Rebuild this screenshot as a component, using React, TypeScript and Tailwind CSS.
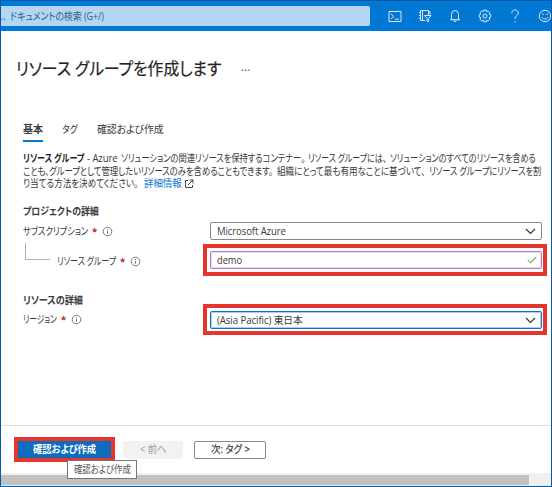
import React, { useLayoutEffect, useRef, useState } from 'react';
import clsx from 'clsx';

const CloudShellIcon = () => (
  <svg className="h-[13px] w-[14px]" viewBox="0 0 14 13" fill="none" stroke="currentColor">
    <path d="M1 1.5h12v10H1z" />
    <path d="M3 4l2.7 2.4L3 8.8M7 9.2h4" />
  </svg>
);

const DirectoryFilterIcon = () => (
  <svg className="h-[14px] w-[14px]" viewBox="0 0 14 14" fill="none" stroke="currentColor">
    <path d="M7 11.5H2.5v-10h8V6M4.5 1.5v10M1 3.5h1.5M1 6.5h1.5M1 9.5h1.5M10.5 2.5h1.5v3" />
    <path d="M6.5 6.5h6.5L10.7 9.3v3.2H9V9.3z" />
  </svg>
);

const BellIcon = () => (
  <svg className="h-[14px] w-[12px]" viewBox="0 0 12 14" fill="none" stroke="currentColor">
    <path d="M2.5 10.5V5.5a3.5 4 0 0 1 7 0v5M1 10.7h10" />
    <path d="M4.7 11.2a1.3 1.3 0 0 0 2.6 0" />
  </svg>
);

const GearIcon = () => (
  <svg className="h-[14px] w-[14px]" viewBox="0 0 14 14" fill="none" stroke="currentColor" strokeLinejoin="round">
    <path d="M5.8 1h2.4l.4 1.6 1.4-.8 1.9 1.9-.9 1.4 1.7.5v2.6l-1.7.5.9 1.5-1.9 1.9-1.4-.9-.4 1.6H5.8l-.5-1.6-1.4.9L2 10.2l.9-1.5-1.6-.5V5.6L2.9 5 2 3.7l1.9-1.9 1.4.8z" />
    <circle cx="7" cy="7" r="2" />
  </svg>
);

const HelpIcon = () => (
  <svg className="h-[14px] w-[10px]" viewBox="0 0 10 14" fill="none" stroke="currentColor">
    <path d="M1.8 4.3C1.8 2.200 3.100 1 5 1s3.300 1.200 3.300 3C8.300 6.500 5 6.700 5 10" />
    <path d="M5 11.800v1.400" />
  </svg>
);

const SmileIcon = () => (
  <svg className="h-[14px] w-[14px]" viewBox="0 0 14 14" fill="none" stroke="currentColor">
    <circle cx="7" cy="7" r="5.7" />
    <path d="M4 8.300c1.200 2.300 4.800 2.300 6 0M5 4.500v1.500M9 4.500v1.500" />
  </svg>
);

const InfoIcon = () => (
  <svg className="h-[11px] w-[11px] shrink-0 text-[#605e5c]" viewBox="0 0 11 11" fill="none" stroke="currentColor" strokeWidth="0.8">
    <circle cx="5.5" cy="5.5" r="4.3" />
    <path d="M5.500 4.900v3M5.500 3v1" />
  </svg>
);

const ExternalIcon = () => (
  <svg className="h-[10px] w-[10px] text-[#323130]" viewBox="0 0 10 10" fill="none" stroke="currentColor" strokeWidth="0.9">
    <path d="M4 1.500H1.500v7h7V6M5.500 1H9v3.500M9 1L4 6" />
  </svg>
);

const ChevronIcon = () => (
  <svg className="h-[7px] w-[11px] text-[#323130]" viewBox="0 0 11 7" fill="none" stroke="currentColor" strokeWidth="1.1">
    <path d="M1 1l4.500 4.500L10 1" />
  </svg>
);

const CheckIcon = () => (
  <svg className="h-[8px] w-[10px] text-[#6bb23c]" viewBox="0 0 10 8" fill="none" stroke="currentColor" strokeWidth="1.1">
    <path d="M.8 4.200l2.700 2.600L9.300 1" />
  </svg>
);

const toolbarIcons = [CloudShellIcon, DirectoryFilterIcon, BellIcon, GearIcon, HelpIcon, SmileIcon];

// Condenses its text so that it fills exactly the width of the box
const FitText: React.FC<{ className: string; children: string }> = ({ className, children }) => {
  const boxRef = useRef<HTMLSpanElement>(null);
  const textRef = useRef<HTMLSpanElement>(null);
  const [scale, setScale] = useState(1);

  useLayoutEffect(() => {
    if (boxRef.current && textRef.current) {
      setScale(boxRef.current.clientWidth / textRef.current.offsetWidth);
    }
  }, [children]);

  return (
    <span ref={boxRef} className={clsx('block shrink-0', className)}>
      <span ref={textRef} className="inline-block origin-left tracking-[-0.1px]" style={{ transform: `scaleX(${scale})` }}>
        {children}
      </span>
    </span>
  );
};

interface FieldLabelProps {
  text: string;
  className: string;
}

const FieldLabel: React.FC<FieldLabelProps> = ({ text, className }) => (
  <div className="flex h-[18px] items-center">
    <FitText className={className}>{text}</FitText>
    <span className="mr-[3px] w-[11px] shrink-0 pl-[4px] pt-[2px] text-[9.500px] font-bold text-[#b3262c]">*</span>
    <InfoIcon />
  </div>
);

interface FieldBoxProps {
  className: string;
  icon: React.ReactNode;
  children: React.ReactNode;
}

const FieldBox: React.FC<FieldBoxProps> = ({ className, icon, children }) => (
  <div className={clsx('flex h-[18px] items-center justify-between rounded-[2px] border bg-white pl-[6px]', className)}>
    {children}
    {icon}
  </div>
);

// Red outline that marks the fields to fill in
const Highlight: React.FC<{ className: string; children: React.ReactNode }> = ({ className, children }) => (
  <div className={clsx('border-4 border-[#e5352d]', className)}>{children}</div>
);

const App: React.FC = () => {
  return (
    <div className="flex h-[487px] w-[552px] flex-col overflow-hidden whitespace-nowrap border border-[#0a59a4] bg-white font-['Open_Sans','Noto_Sans_CJK_JP',sans-serif] text-[10.5px] leading-none text-[#3b3a39] [font-feature-settings:'palt']">
      <header className="flex h-[30px] shrink-0 items-center bg-[#0078d4]">
        <div className="flex h-5 w-[369px] shrink-0 items-center rounded-r-[2px] bg-[#b3d6f2] text-[#2f5f8c]">
          <FitText className="-ml-[7px] w-[8px]">ス</FitText>
          <FitText className="ml-[1px] mr-[4px] w-[3px]">、</FitText>
          <FitText className="w-[94px]">ドキュメントの検索 (G+/)</FitText>
        </div>
        <div className="ml-[10px] flex shrink-0 text-[#d5e9f8]">
          {toolbarIcons.map((Icon, i) => (
            <div key={i} className="flex w-[30px] shrink-0 items-center justify-center">
              <Icon />
            </div>
          ))}
        </div>
      </header>

      <main className="flex h-[394px] shrink-0 flex-col">
        <div className="mt-[26px] flex h-6 items-center pl-[15px] text-[#252423]">
          <h1 className="w-[225px] text-[17.500px] [-webkit-text-stroke:0.2px]">
            <FitText className="w-[205px]">リソース グループを作成します</FitText>
          </h1>
          <span className="pb-[5px] text-[12px] text-[#605e5c]">…</span>
        </div>

        <nav className="mt-[38px] flex h-[23px] pl-[22px]">
          <div className="mr-[19px] w-5 border-b-2 border-[#0078d4] pt-[5px] font-bold">
            <FitText className="w-5">基本</FitText>
          </div>
          <div className="w-[35px] pt-[5px]">
            <FitText className="w-4">タグ</FitText>
          </div>
          <div className="pt-[5px]">
            <FitText className="w-[67px]">確認および作成</FitText>
          </div>
        </nav>

        <div className="mt-[10px] pl-[22px] leading-[12.700px]">
          <p className="flex">
            <b className="mr-[3px] text-[#201f1e]">
              <FitText className="w-[61px]">リソース グループ</FitText>
            </b>
            <FitText className="mr-[3px] w-[31px]">- Azure</FitText>
            <FitText className="mr-[3px] w-[184px]">ソリューションの関連リソースを保持するコンテナー。</FitText>
            <FitText className="mr-[3px] w-[79px]">リソース グループには、</FitText>
            <FitText className="w-[146px]">ソリューションのすべてのリソースを含める</FitText>
          </p>
          <p className="flex">
            <FitText className="mr-[4px] w-[250px]">ことも、グループとして管理したいリソースのみを含めることもできます。</FitText>
            <FitText className="mr-[4px] w-[148px]">組織にとって最も有用なことに基づいて、</FitText>
            <FitText className="w-[112px]">リソース グループにリソースを割</FitText>
          </p>
          <p className="flex items-center">
            <FitText className="mr-[6px] w-[115px]">り当てる方法を決めてください。</FitText>
            <a className="mr-[2px] text-[#0f78d4]">
              <FitText className="w-[38px]">詳細情報</FitText>
            </a>
            <ExternalIcon />
          </p>
        </div>

        <section className="mt-[16px] flex pl-[22px]">
          <div className="w-[180px] shrink-0">
            <h2 className="h-[16px] font-bold">
              <FitText className="w-[76px]">プロジェクトの詳細</FitText>
            </h2>
            <FieldLabel text="サブスクリプション" className="w-[65px]" />
            <div className="mt-[3px] flex">
              <div className="ml-[2px] mr-[7px] h-[17px] w-[25px] border-b border-l border-[#b3b0ad]" />
              <div className="mt-[9px]">
                <FieldLabel text="リソース グループ" className="w-[59px]" />
              </div>
            </div>
          </div>
          <div className="w-[344px] shrink-0 pt-[16px]">
            <FieldBox className="ml-[7px] mr-[5px] mb-[4px] border-[#8a8886] pr-[5px]" icon={<ChevronIcon />}>
              <FitText className="w-[69px]">Microsoft Azure</FitText>
            </FieldBox>
            <Highlight className="h-[32px] p-[3px] pr-[1px]">
              <FieldBox className="border-[#b47ac9] pr-[4px] shadow-[inset_0_0_0_1px_#ecd9f2]" icon={<CheckIcon />}>
                <FitText className="w-[25px]">demo</FitText>
              </FieldBox>
            </Highlight>
          </div>
        </section>

        <section className="mt-[19px] flex pl-[22px]">
          <div className="w-[180px] shrink-0">
            <h2 className="h-[15px] font-bold">
              <FitText className="w-[60px]">リソースの詳細</FitText>
            </h2>
            <FieldLabel text="リージョン" className="w-[34px]" />
          </div>
          <Highlight className="mt-[9px] h-[31px] w-[344px] shrink-0 p-[3px] pr-[1px]">
            <FieldBox className="border-[#0078d4] pr-[5px] shadow-[inset_0_0_0_1px_#a6cff0]" icon={<ChevronIcon />}>
              <FitText className="w-[86px]">(Asia Pacific) 東日本</FitText>
            </FieldBox>
          </Highlight>
        </section>
      </main>

      <footer className="relative flex grow flex-col justify-between border-t border-[#e1dfdd]">
        <div className="ml-[13px] mt-[11px] flex items-center">
          <Highlight className="h-[25px] w-[101px]">
            <button className="flex h-full w-full items-center justify-center bg-[#0f6cbd] font-bold text-white">
              <FitText className="w-[63px]">確認および作成</FitText>
            </button>
          </Highlight>
          <button className="ml-2 flex h-[18px] w-[60px] items-center justify-center rounded-[2px] bg-[#f3f2f1] text-[#a19f9d]">
            <FitText className="w-[27px]">&lt; 前へ</FitText>
          </button>
          <button className="ml-[11px] flex h-[18px] w-[72px] items-center justify-center rounded-[2px] border border-[#8a8886] [-webkit-text-stroke:0.2px]">
            <FitText className="w-[39px]">次: タグ &gt;</FitText>
          </button>
        </div>
        <div className="h-[13px] bg-[#f0f0f0] pb-[1px] pt-[2px]">
          <div className="h-[10px] w-[528px] bg-[#c1c1c1]" />
        </div>
        <div className="absolute left-[66px] top-[34px] flex h-[19px] w-[70px] items-center justify-center border border-[#767676] bg-white text-[#575757]">
          <FitText className="w-[57px]">確認および作成</FitText>
        </div>
      </footer>
    </div>
  );
};

export default App;
